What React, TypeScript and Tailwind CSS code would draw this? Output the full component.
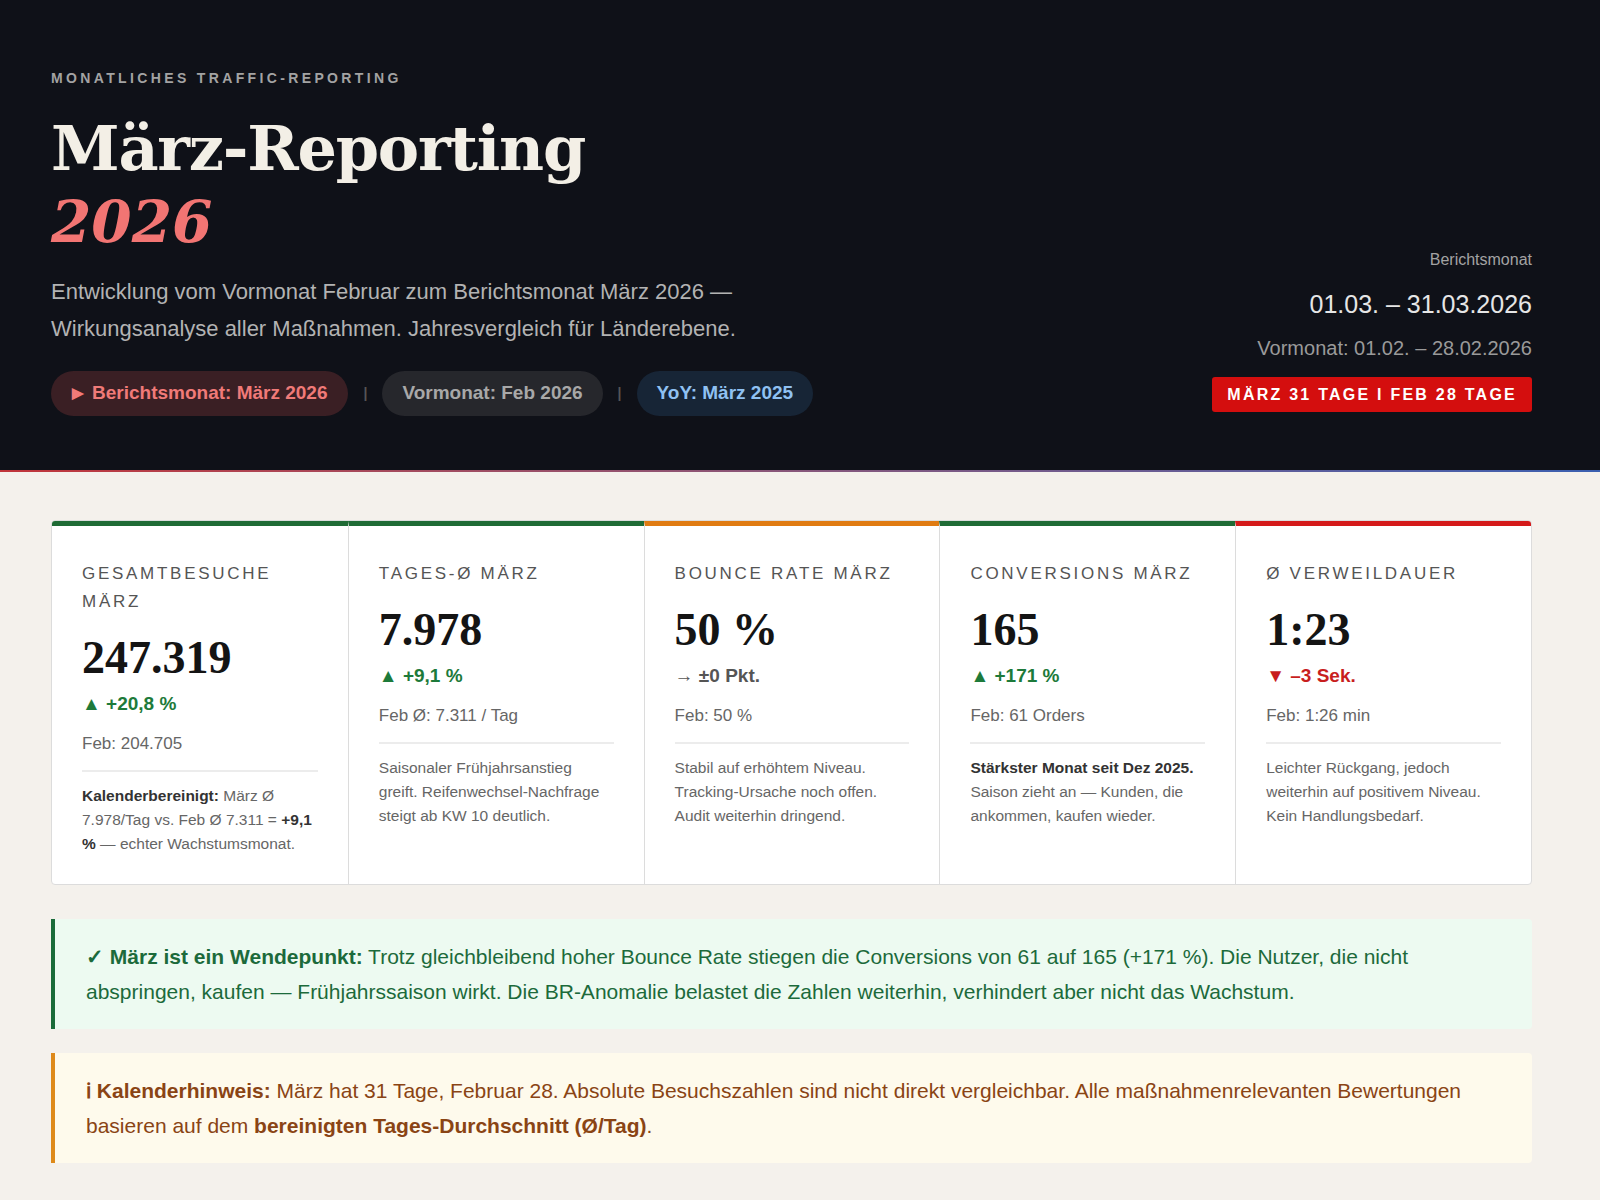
import React from 'react';

const sans = { fontFamily: '"Liberation Sans", Arial, sans-serif' };
const serif = { fontFamily: '"DejaVu Serif", "Liberation Serif", serif' };
const numSerif = { fontFamily: '"Liberation Serif", "DejaVu Serif", serif' };

interface Kpi {
  label: string;
  value: string;
  change: string;
  up: boolean | null;
  prev: string;
  note: React.ReactNode;
  bar: string;
}

const kpis: Kpi[] = [
  {
    label: 'Gesamtbesuche März',
    value: '247.319',
    change: '▲ +20,8 %',
    up: true,
    prev: 'Feb: 204.705',
    bar: 'border-t-[#1f6b35]',
    note: (
      <>
        <b className="text-[#333]">Kalenderbereinigt:</b> März Ø 7.978/Tag vs. Feb Ø 7.311 ={' '}
        <b className="text-[#333]">+9,1 %</b> — echter Wachstumsmonat.
      </>
    ),
  },
  {
    label: 'Tages-Ø März',
    value: '7.978',
    change: '▲ +9,1 %',
    up: true,
    prev: 'Feb Ø: 7.311 / Tag',
    bar: 'border-t-[#1f6b35]',
    note: 'Saisonaler Frühjahrsanstieg greift. Reifenwechsel-Nachfrage steigt ab KW 10 deutlich.',
  },
  {
    label: 'Bounce Rate März',
    value: '50 %',
    change: '→ ±0 Pkt.',
    up: null,
    prev: 'Feb: 50 %',
    bar: 'border-t-[#e07b12]',
    note: 'Stabil auf erhöhtem Niveau. Tracking-Ursache noch offen. Audit weiterhin dringend.',
  },
  {
    label: 'Conversions März',
    value: '165',
    change: '▲ +171 %',
    up: true,
    prev: 'Feb: 61 Orders',
    bar: 'border-t-[#1f6b35]',
    note: (
      <>
        <b className="text-[#333]">Stärkster Monat seit Dez 2025.</b> Saison zieht an — Kunden, die ankommen, kaufen wieder.
      </>
    ),
  },
  {
    label: 'Ø Verweildauer',
    value: '1:23',
    change: '▼ –3 Sek.',
    up: false,
    prev: 'Feb: 1:26 min',
    bar: 'border-t-[#d41a1a]',
    note: 'Leichter Rückgang, jedoch weiterhin auf positivem Niveau. Kein Handlungsbedarf.',
  },
];

export default function App() {
  return (
    <div className="min-h-[1200px] bg-[#f4f1ec]" style={sans}>
      {/* Header */}
      <header className="bg-[#0f1118] pl-[51px] pr-[68px] pt-[68px] pb-[56px] relative">
        <div className="flex justify-between items-end">
          <div>
            <div className="text-[14px] font-bold tracking-[0.24em] text-[#a3a3a3]">MONATLICHES TRAFFIC-REPORTING</div>
            <h1 className="mt-[24px] text-[62px] leading-[72px] font-bold text-[#f3efe6] tracking-[-0.02em]" style={serif}>
              März-Reporting
            </h1>
            <div className="text-[58px] leading-[74px] italic font-bold text-[#f27573]" style={serif}>2026</div>
            <p className="mt-[14px] text-[22px] leading-[37px] text-[#b3b3b3] max-w-[760px]">
              Entwicklung vom Vormonat Februar zum Berichtsmonat März 2026 — Wirkungsanalyse aller Maßnahmen. Jahresvergleich für Länderebene.
            </p>
            <div className="mt-[24px] flex items-center gap-[15px] text-[19px] font-bold">
              <span className="rounded-full bg-[#3a1f24] text-[#f07a78] px-[21px] h-[45px] flex items-center gap-2">
                <span className="text-[15px]">▶</span>Berichtsmonat: März 2026
              </span>
              <span className="text-[#555] text-[14px]">|</span>
              <span className="rounded-full bg-[#26272c] text-[#a8a8a8] px-[20px] h-[45px] flex items-center">Vormonat: Feb 2026</span>
              <span className="text-[#555] text-[14px]">|</span>
              <span className="rounded-full bg-[#172536] text-[#8fc1f2] px-[20px] h-[45px] flex items-center">YoY: März 2025</span>
            </div>
          </div>
          <div className="flex flex-col items-end pb-[4px]">
            <div className="text-[16px] text-[#a3a3a3]">Berichtsmonat</div>
            <div className="mt-[14px] text-[25px] text-[#e6e6e6]">01.03. – 31.03.2026</div>
            <div className="mt-[10px] text-[20px] text-[#9a9a9a]">Vormonat: 01.02. – 28.02.2026</div>
            <div className="mt-[14px] bg-[#d40e0e] text-white text-[16px] font-bold tracking-[0.14em] px-[15px] h-[35px] flex items-center rounded-[3px]">
              MÄRZ 31 TAGE I FEB 28 TAGE
            </div>
          </div>
        </div>
        <div className="absolute left-0 right-0 bottom-0 h-[2px] bg-gradient-to-r from-[#c0343a] to-[#3a5fb0]" />
      </header>

      <main className="pl-[51px] pr-[68px] pt-[48px] pb-[40px]">
        {/* KPI cards */}
        <div className="grid grid-cols-5 bg-white border border-[#dcdcdc] rounded-[4px] overflow-hidden">
          {kpis.map((k, i) => (
            <div key={i} className={`border-t-[5px] ${k.bar} ${i > 0 ? 'border-l border-l-[#dcdcdc]' : ''} px-[30px] pt-[34px] pb-[28px]`}>
              <div className="text-[17px] leading-[28px] tracking-[0.16em] uppercase text-[#555]">{k.label}</div>
              <div className="mt-[14px] text-[46px] leading-[56px] font-bold text-[#141414]" style={numSerif}>{k.value}</div>
              <div
                className={`mt-[4px] text-[19px] font-bold ${k.up === null ? 'text-[#555]' : k.up ? 'text-[#1d7a3a]' : 'text-[#c81e1e]'}`}
              >
                {k.change}
              </div>
              <div className="mt-[12px] text-[17px] text-[#666]">{k.prev}</div>
              <div className="mt-[14px] border-t-2 border-[#ececec] pt-[12px] text-[15.5px] leading-[24px] text-[#666]">{k.note}</div>
            </div>
          ))}
        </div>

        {/* Callouts */}
        <div className="mt-[34px] bg-[#edfaf1] border-l-[4px] border-[#1b6b3a] rounded-r-[4px] px-[31px] py-[20px] text-[21px] leading-[35px] text-[#1c6a3b]">
          <b>✓ März ist ein Wendepunkt:</b> Trotz gleichbleibend hoher Bounce Rate stiegen die Conversions von 61 auf 165 (+171 %). Die Nutzer, die nicht abspringen, kaufen — Frühjahrssaison wirkt. Die BR-Anomalie belastet die Zahlen weiterhin, verhindert aber nicht das Wachstum.
        </div>
        <div className="mt-[24px] bg-[#fefaec] border-l-[4px] border-[#de8a1a] rounded-r-[4px] px-[31px] py-[20px] text-[21px] leading-[35px] text-[#8a4414]">
          <b>ℹ Kalenderhinweis:</b> März hat 31 Tage, Februar 28. Absolute Besuchszahlen sind nicht direkt vergleichbar. Alle maßnahmenrelevanten Bewertungen basieren auf dem <b>bereinigten Tages-Durchschnitt (Ø/Tag)</b>.
        </div>
      </main>
    </div>
  );
}
